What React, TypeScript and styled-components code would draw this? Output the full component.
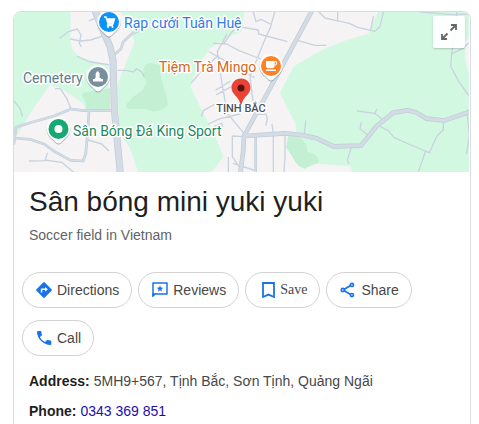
import React from "react";
import styled, { createGlobalStyle } from "styled-components";

const GlobalStyle = createGlobalStyle`
  * { box-sizing: border-box; }
  body {
    margin: 0;
    background: #fff;
    font-family: "Liberation Sans", Arial, sans-serif;
    font-size: 14px;
    line-height: 20px;
  }
`;

const Page = styled.main`
  padding: 11px 8px 0 13px;
`;

const Card = styled.article`
  border: 1px solid #dadce0;
  border-radius: 8px;
  overflow: hidden;
`;

const MapArea = styled.div`
  position: relative;
  height: 160px;
  margin-right: 1px;
  background: #f5f3f3;
`;

const MapDrawing = styled.svg`
  display: block;
  width: 100%;
  height: 100%;
`;

const MapLabel = styled.text<{ $small?: boolean }>`
  font-family: Roboto, sans-serif;
  font-size: ${(p) => (p.$small ? 11 : 14)}px;
  font-weight: ${(p) => (p.$small ? 500 : 400)};
  text-anchor: ${(p) => (p.$small ? "middle" : "start")};
  stroke: #fff;
  stroke-width: 3px;
  stroke-linejoin: round;
  paint-order: stroke;
`;

const ExpandButton = styled.button`
  position: absolute;
  top: 4px;
  right: 4px;
  display: grid;
  place-items: center;
  width: 32px;
  height: 32px;
  padding: 0;
  border: 0;
  border-radius: 2px;
  background: rgba(255, 255, 255, 0.92);
  box-shadow: 0 1px 2px rgba(0, 0, 0, 0.2);
  color: #666;
`;

const Heading = styled.header`
  padding: 12px 15px 0;
`;

const Title = styled.h1`
  margin: 0 0 5px;
  font-size: 28px;
  font-weight: 400;
  line-height: 36px;
  color: #1f1f1f;
`;

const Subtitle = styled.p`
  margin: 0;
  color: #5f6368;
`;

const Actions = styled.div`
  display: flex;
  flex-wrap: wrap;
  gap: 12px 6px;
  padding: 27px 8px 0;
`;

const Chip = styled.button<{ $serif?: boolean }>`
  display: flex;
  align-items: center;
  gap: 5px;
  height: 36px;
  padding: 0 12px 0 13px;
  border: 1px solid #d2d2d2;
  border-radius: 18px;
  background: #fff;
  color: #474747;
  font-family: ${(p) => (p.$serif ? '"Liberation Serif", "Times New Roman", serif' : "inherit")};
  font-size: 14px;
  line-height: 20px;
`;

const ChipIcon = styled.svg`
  flex: none;
  width: 16px;
  height: 18px;
  color: #1a73e8;
`;

const Facts = styled.dl`
  display: grid;
  gap: 10px;
  margin: 0;
  padding: 15px 15px 16px;
`;

const Fact = styled.div`
  display: flex;
  gap: 4px;
`;

const FactName = styled.dt`
  font-weight: 700;
  color: #1f1f1f;
`;

const FactValue = styled.dd`
  margin: 0;
  color: #474747;
`;

const PhoneLink = styled.a`
  color: #1a0dab;
  text-decoration: none;
`;

const pinShape =
  "M0 -11.8C6.600 -11.800 11.800 -7 11.800 -0.500C11.800 4.300 9.200 7.300 5.800 10.300L2.400 13.600Q0 15.600 -2.400 13.600L-5.800 10.300C-9.200 7.300 -11.800 4.300 -11.800 -0.500C-11.800 -7 -6.600 -11.800 0 -11.800Z";

interface PinProps {
  x: number;
  y: number;
  color: string;
  children: React.ReactNode;
}

function Pin({ x, y, color, children }: PinProps) {
  return (
    <g transform={`translate(${x} ${y})`}>
      <path d={pinShape} fill="#5b6770" opacity=".5" transform="translate(0 1)" />
      <path d={pinShape} fill="#fff" />
      <circle r="10" fill={color} />
      {children}
    </g>
  );
}

const minorRoads = [
  "M180 114L205 95L232 87L243 105L238 130L244 140M212 117L240 123L272 120L312 107M268 62L290 54",
  "M233 170L270 186L326 194M355 211L380 211L400 216L410 206L425 216L432 230",
  "M42 303L60 325L67 348M167 266L181 266L200 295L212 325M265 420L305 432L326 452M88 483L135 482L142 460M135 480L185 487L220 516",
  "M628 156L680 185L762 232M680 104L652 155L665 245L682 340L732 400M640 130L680 132L717 152L790 180M650 284L712 250M648 270L690 244M670 132L700 90L717 60M575 248L600 218L650 170M605 348L610 332L642 314M625 372L660 356L720 342M642 380L665 370L668 380M697 470L697 408L730 410M697 470L717 500",
  "M760 36L768 65L782 58L812 72M717 80L775 90L776 102L860 124M824 36L812 80L790 130L770 180L750 230L760 310M895 122L945 136L977 136M957 36L975 54L1010 62L1048 70L1073 82L1125 94L1140 80L1150 36M1013 36V64M1120 50L1112 90",
  "M760 343L798 343L802 355L798 375M816 373L820 400V516M855 404V470L852 516M913 400L917 363M1053 445L1042 480L1046 490M1072 333L1124 340L1146 357M1124 340L1131 328M1084 368L1080 386L1100 402",
  "M1140 379L1165 392L1182 412L1225 432L1288 458L1311 408L1330 389V366M1276 455L1255 516M1370 36V60L1355 160L1352 198L1376 245L1410 292M1357 160L1390 145L1410 125M1260 36L1360 44L1410 42M1400 460L1408 405L1402 345M685 516V472M700 490L760 510",
];

const mediumRoads = [
  "M345 163L362 148L370 125L392 104L430 84",
  "M42 414L90 418L132 432L164 455L212 481L249 483L257 462L263 400L267 334",
  "M42 430L48 382L90 368L162 348L213 327L250 332L340 331",
  "M767 405V516",
];

const majorRoads = [
  "M284 30L302 75L330 140L339 180L343 330L361 520",
  "M934 36L840 210L732 408L730 450L721 520",
  "M732 408L855 400L905 405L950 415L1001 439L1083 437L1130 378L1180 338L1222 331L1248 337L1280 356L1333 362L1412 334",
];

function Roads() {
  return (
    <g fill="none" strokeLinejoin="round" strokeLinecap="round">
      <path d={minorRoads.join("")} stroke="#c8d3df" strokeWidth="4" />
      <path d={mediumRoads.join("")} stroke="#bfcbd7" strokeWidth="8" />
      <path d={mediumRoads.join("")} stroke="#d3dce5" strokeWidth="5" />
      <path d={majorRoads[0]} stroke="#bfcbd7" strokeWidth="21" />
      <path d={majorRoads.slice(1).join("")} stroke="#bfcbd7" strokeWidth="14" />
      <path d={majorRoads[0]} stroke="#d3dce5" strokeWidth="17" />
      <path d={majorRoads.slice(1).join("")} stroke="#d3dce5" strokeWidth="10" />
    </g>
  );
}

function PlaceMap() {
  return (
    <MapDrawing viewBox="14 12 455 160" preserveAspectRatio="xMidYMid slice" role="img" aria-label="Map of Tịnh Bắc">
      <g transform="scale(.33333)">
        <g fill="#d3f8e2">
          <path d="M40 30H212L211 120L218 150L240 172L326 196V330L258 330L248 308L185 266L150 255L100 325L52 405L40 402Z" />
          <path d="M362 30L375 65L392 96L404 126L385 172L362 228L352 260L358 400L390 445L416 520H632L670 470L640 395L605 330L572 262L580 232L602 185L630 145L670 120L724 94L734 30Z" />
          <path d="M1136 30L1105 102L1040 120L965 150L880 200L840 278L862 325L886 368L890 400L860 415L890 460L930 490L1050 498L1060 520H1412V240L1396 180L1395 125L1412 112V30Z" />
        </g>
        <g fill="#c3efd3">
          <path d="M432 202Q442 185 460 190L480 196L482 230L500 290L504 315Q485 335 460 335L440 328H385Q375 322 379 312L400 290L428 270L440 245L428 225Z" />
          <path d="M248 278L330 265V330H258Q262 308 247 290Z" />
          <path d="M865 408L900 412L920 435L922 456Q958 462 955 488L930 498L914 506Q890 500 880 475L858 442Z" />
        </g>
        <Roads />
      </g>

      <Pin x={109} y={22} color="#0b93f9">
        <path d="M-5 -5H-3L-1 2H4L5.500 -3H-2.500M-1 2L-1.500 3.500H4" fill="none" stroke="#fff" strokeWidth="1.300" />
        <path d="M-2.500 -3H5.500L4 1.500H-1.200Z" fill="#fff" />
        <circle cx="-1" cy="5" r="1" fill="#fff" />
        <circle cx="3.500" cy="5" r="1" fill="#fff" />
      </Pin>
      <Pin x={98} y={77} color="#78909c">
        <path d="M-5 4.500V2H-3V1H-2.400V-3.500L-1.200 -5.500H.6L1.600 -3.500V1H3V2H5V4.500Z" fill="#fff" />
      </Pin>
      <Pin x={58.5} y={129} color="#17a974">
        <circle r="4" fill="#fff" />
      </Pin>
      <Pin x={271} y={66} color="#ff8126">
        <path d="M-5 -5H5.500Q7 -3 5 -.5H3.500Q3.500 2.200 1 2.200H-2.500Q-5 2.200 -5 0Z" fill="#fff" />
        <path d="M3.700 -3.800H5V-1.600H3.700Z" fill="#ff8126" />
        <path d="M-5 3.400H5V4.900H-5Z" fill="#fff" />
      </Pin>

      <MapLabel x="124" y="28" fill="#2f7bea">Rạp cưới Tuân Huệ</MapLabel>
      <MapLabel x="23" y="83" fill="#607d8b">Cemetery</MapLabel>
      <MapLabel x="73" y="136" fill="#23895f">Sân Bóng Đá King Sport</MapLabel>
      <MapLabel x="159" y="72" fill="#d9651b">Tiệm Trà Mingo</MapLabel>
      <MapLabel x="241" y="112" fill="#4a5158" $small>TỊNH BẮC</MapLabel>

      <path
        d="M241 78.500C235.500 78.500 231.500 82.500 231.500 88C231.500 94 238.500 96.500 240.200 103.500Q241 105.500 241.800 103.500C243.500 96.500 250.500 94 250.500 88C250.500 82.500 246.500 78.500 241 78.500Z"
        fill="#ea4335"
      />
      <circle cx="241" cy="88" r="3.500" fill="#5c1410" />
    </MapDrawing>
  );
}

function DirectionsIcon() {
  return (
    <ChipIcon viewBox="0 0 16 18" aria-hidden="true">
      <path
        fill="currentColor"
        fillRule="evenodd"
        d="M7.200 1.400Q8 .7 8.800 1.400L15.500 8.200Q16.200 9 15.500 9.800L8.800 16.600Q8 17.300 7.200 16.600L.5 9.800Q-.2 9 .5 8.200ZM9.200 5.900V7.500H5.500Q4.800 7.500 4.800 8.200V11.500H6.300V9H9.200V10.700L11.800 8.300Z"
      />
    </ChipIcon>
  );
}

function ReviewsIcon() {
  return (
    <ChipIcon viewBox="0 0 16 18" aria-hidden="true">
      <path d="M1 15V2H15V13H3Z" fill="none" stroke="currentColor" strokeWidth="1.500" strokeLinejoin="round" />
      <path d="M.3 12.300H4L.3 16.500Z" fill="currentColor" />
      <path d="M8 4.300L8.900 6.600L11.200 6.800L9.500 8.300L10 10.500L8 9.300L6 10.500L6.500 8.300L4.800 6.800L7.100 6.600Z" fill="currentColor" />
    </ChipIcon>
  );
}

function SaveIcon() {
  return (
    <ChipIcon viewBox="0 0 16 18" aria-hidden="true">
      <path d="M4 2H15V16L9.500 13.600L4 16Z" fill="none" stroke="currentColor" strokeWidth="1.800" />
    </ChipIcon>
  );
}

function ShareIcon() {
  return (
    <ChipIcon viewBox="0 0 16 18" aria-hidden="true">
      <g fill="none" stroke="currentColor" strokeWidth="1.700">
        <path d="M4.300 8.200L10.200 4.700M4.300 9.800L10.200 13.300" />
        <circle cx="2.900" cy="9" r="1.600" />
        <circle cx="11.900" cy="3.900" r="1.600" />
        <circle cx="11.900" cy="14.100" r="1.600" />
      </g>
    </ChipIcon>
  );
}

function CallIcon() {
  return (
    <ChipIcon viewBox="0 0 16 18" aria-hidden="true">
      <path
        fill="currentColor"
        d="M3.800 7.900a11 11 0 0 0 5.200 5.200l1.800-1.800a.8.8 0 0 1 .8-.2c.9.300 1.900.5 2.900.5.500 0 .8.400.8.800v2.800c0 .5-.3.800-.8.800C7.400 16 1 9.700 1 2.800c0-.5.400-.8.800-.8h2.800c.5 0 .8.300.8.800 0 1 .2 2 .5 2.900.1.300 0 .6-.2.800Z"
      />
    </ChipIcon>
  );
}

export default function App() {
  return (
    <>
      <GlobalStyle />
      <Page>
        <Card>
          <MapArea>
            <PlaceMap />
            <ExpandButton type="button" aria-label="Expand map">
              <svg width="18" height="18" viewBox="0 0 18 18" fill="none" stroke="currentColor" strokeWidth="1.800" aria-hidden="true">
                <path d="M11 2H16V7M16 2L10.500 7.500M2 11V16H7M2 16L7.500 10.500" />
              </svg>
            </ExpandButton>
          </MapArea>
          <Heading>
            <Title>Sân bóng mini yuki yuki</Title>
            <Subtitle>Soccer field in Vietnam</Subtitle>
          </Heading>
          <Actions>
            <Chip type="button"><DirectionsIcon />Directions</Chip>
            <Chip type="button"><ReviewsIcon />Reviews</Chip>
            <Chip type="button" $serif><SaveIcon />Save</Chip>
            <Chip type="button"><ShareIcon />Share</Chip>
            <Chip type="button"><CallIcon />Call</Chip>
          </Actions>
          <Facts>
            <Fact>
              <FactName>Address:</FactName>
              <FactValue>5MH9+567, Tịnh Bắc, Sơn Tịnh, Quảng Ngãi</FactValue>
            </Fact>
            <Fact>
              <FactName>Phone:</FactName>
              <FactValue><PhoneLink href="tel:0343369851">0343 369 851</PhoneLink></FactValue>
            </Fact>
          </Facts>
        </Card>
      </Page>
    </>
  );
}
